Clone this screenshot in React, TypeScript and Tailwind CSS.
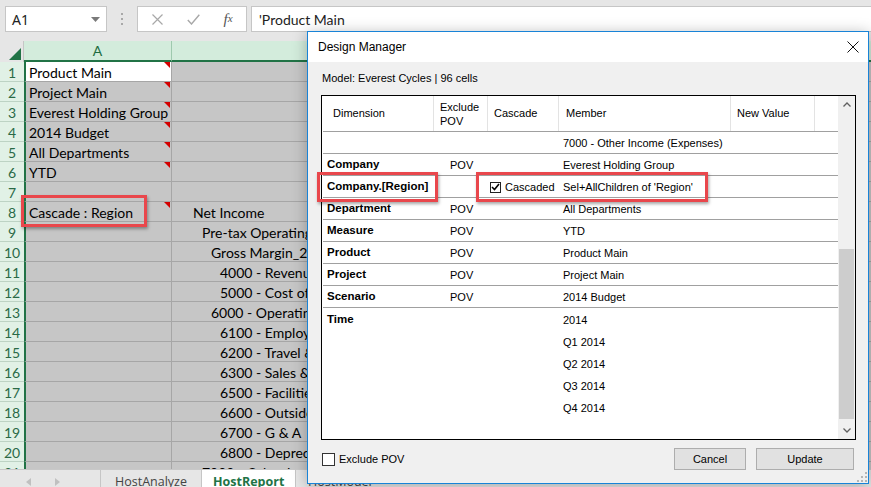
import React from "react";

type Row = { n: number; a?: string; b?: string; ind?: number; mark?: boolean };

const sheetRows: Row[] = [
  { n: 1, a: "Product Main", mark: true },
  { n: 2, a: "Project Main", mark: true },
  { n: 3, a: "Everest Holding Group", mark: true },
  { n: 4, a: "2014 Budget", mark: true },
  { n: 5, a: "All Departments", mark: true },
  { n: 6, a: "YTD", mark: true },
  { n: 7 },
  { n: 8, a: "Cascade : Region", b: "Net Income", ind: 21, mark: true },
  { n: 9, b: "Pre-tax Operating Income", ind: 30 },
  { n: 10, b: "Gross Margin_2800", ind: 39 },
  { n: 11, b: "4000 - Revenue", ind: 48 },
  { n: 12, b: "5000 - Cost of Goods Sold", ind: 48 },
  { n: 13, b: "6000 - Operating Expenses", ind: 39 },
  { n: 14, b: "6100 - Employee Expenses", ind: 48 },
  { n: 15, b: "6200 - Travel & Entertainment", ind: 48 },
  { n: 16, b: "6300 - Sales & Marketing", ind: 48 },
  { n: 17, b: "6500 - Facilities", ind: 48 },
  { n: 18, b: "6600 - Outside Services", ind: 48 },
  { n: 19, b: "6700 - G & A", ind: 48 },
  { n: 20, b: "6800 - Depreciation", ind: 48 },
  { n: 21, b: "7000 - Other Income (Expenses)", ind: 30 },
];

const indCls: Record<number, string> = {
  21: "pl-[21px]",
  30: "pl-[30px]",
  39: "pl-[39px]",
  48: "pl-[48px]",
};

type DmRow = { dim: string; ex?: string; cas?: boolean; mem: string };
const dmRows: DmRow[] = [
  { dim: "", mem: "7000 - Other Income (Expenses)" },
  { dim: "Company", ex: "POV", mem: "Everest Holding Group" },
  { dim: "Company.[Region]", cas: true, mem: "Sel+AllChildren of 'Region'" },
  { dim: "Department", ex: "POV", mem: "All Departments" },
  { dim: "Measure", ex: "POV", mem: "YTD" },
  { dim: "Product", ex: "POV", mem: "Product Main" },
  { dim: "Project", ex: "POV", mem: "Project Main" },
  { dim: "Scenario", ex: "POV", mem: "2014 Budget" },
];
const timeRows = ["2014", "Q1 2014", "Q2 2014", "Q3 2014", "Q4 2014"];

function CommentMark() {
  return (
    <span className="absolute top-0 right-[1px] w-0 h-0 border-t-[6px] border-t-[#d40000] border-l-[6px] border-l-transparent" />
  );
}

function Toolbar() {
  return (
    <div className="h-[41px] shrink-0 bg-[#e6e6e6] flex items-start pt-[6px]">
      <div className="ml-[5px] w-[102px] h-[26px] bg-white border border-[#c6c6c6] flex items-center justify-between pl-[6px] pr-[6px] text-[14px] text-[#222] font-['Noto_Sans',sans-serif]">
        <span>A1</span>
        <svg width="9" height="5" viewBox="0 0 9 5">
          <path d="M0 0 L9 0 L4.5 5 Z" fill="#7a7a7a" />
        </svg>
      </div>
      <div className="w-[30px] h-[26px] flex flex-col items-center justify-center gap-[3px]">
        <span className="w-[2px] h-[2px] bg-[#a8a8a8]" />
        <span className="w-[2px] h-[2px] bg-[#a8a8a8]" />
        <span className="w-[2px] h-[2px] bg-[#a8a8a8]" />
      </div>
      <div className="w-[110px] h-[26px] bg-white border border-[#c6c6c6] flex items-center">
        <div className="w-[38px] flex justify-center">
          <svg width="11" height="11" viewBox="0 0 11 11">
            <path d="M0.5 0.5 L10.5 10.5 M10.5 0.5 L0.5 10.5" stroke="#a8a8a8" strokeWidth="1.2" />
          </svg>
        </div>
        <div className="w-[34px] flex justify-center">
          <svg width="13" height="11" viewBox="0 0 13 11">
            <path d="M0.8 6 L4.5 10 L12.3 0.8" stroke="#a8a8a8" strokeWidth="1.4" fill="none" />
          </svg>
        </div>
        <div className="w-[36px] flex justify-center text-[15px] italic text-[#555] font-['Liberation_Serif',serif]">
          f<span className="text-[11px] relative top-[2px]">x</span>
        </div>
      </div>
      <div className="ml-[4px] flex-1 h-[26px] bg-white border-y border-l border-[#c6c6c6] flex items-center pl-[7px] text-[14px] text-[#222] font-['Lato',sans-serif]">
        'Product Main
      </div>
    </div>
  );
}

function Sheet() {
  return (
    <div className="flex flex-col shrink-0 font-['Lato',sans-serif]">
      <div className="h-[21px] flex shrink-0">
        <div className="w-[24px] bg-[#e6e6e6] border-r border-[#c6c6c6] flex items-end justify-end pr-[2px] pb-[2px]">
          <svg width="12" height="12" viewBox="0 0 12 12">
            <path d="M12 0 L12 12 L0 12 Z" fill="#217346" />
          </svg>
        </div>
        <div className="w-[148px] bg-[#d3ecdc] border-r border-[#9ec9ae] border-b-2 border-b-[#217346] flex items-center justify-center text-[14px] text-[#1d6b40]">
          A
        </div>
        <div className="flex-1 bg-[#d3ecdc] border-b-2 border-b-[#217346]" />
      </div>
      <div className="h-[407px] overflow-hidden flex flex-col">
        {sheetRows.map((r) => (
          <div key={r.n} className="h-[20px] shrink-0 flex">
            <div className="w-[24px] bg-[#e1f1e6] border-b border-[#bdd3c4] flex items-center justify-center pt-[1px] text-[14px] text-[#2a6a46]">
              {r.n}
            </div>
            <div
              className={
                "relative w-[148px] border-l-2 border-l-[#217346] border-r border-r-[#a6a6a6] border-b border-b-[#a6a6a6] flex items-center pl-[3px] pt-[1px] text-[14px] text-black whitespace-nowrap overflow-hidden " +
                (r.n === 1 ? "bg-white" : "bg-[#c6c6c6]")
              }
            >
              {r.a}
              {r.mark ? <CommentMark /> : null}
            </div>
            <div
              className={
                "w-[135px] bg-[#c6c6c6] border-b border-[#a6a6a6] flex items-center pt-[1px] text-[14px] text-black whitespace-nowrap overflow-hidden " +
                (r.ind ? indCls[r.ind] : "")
              }
            >
              {r.b}
            </div>
            <div className="flex-1 bg-[#c6c6c6] border-b border-[#a6a6a6]" />
          </div>
        ))}
      </div>
    </div>
  );
}

function Tabs() {
  return (
    <div className="h-[25px] shrink-0 bg-[#e6e6e6] border-t border-[#c8c8c8] flex text-[12.5px] font-['Open_Sans',sans-serif]">
      <div className="w-[100px] flex items-center">
        <svg className="ml-[26px]" width="5" height="8" viewBox="0 0 5 8">
          <path d="M5 0 L0 4 L5 8 Z" fill="#c0c0c0" />
        </svg>
        <svg className="ml-[24px]" width="5" height="8" viewBox="0 0 5 8">
          <path d="M0 0 L5 4 L0 8 Z" fill="#c0c0c0" />
        </svg>
      </div>
      <div className="w-[101px] border-l border-[#c6c6c6] flex items-center pl-[14px] text-[#444]">HostAnalyze</div>
      <div className="w-[94px] bg-white border-l border-[#c6c6c6] flex items-center pl-[11px] font-bold text-[#217346]">
        HostReport
      </div>
      <div className="w-[100px] border-l border-[#c6c6c6] flex items-center pl-[12px] text-[#444]">HostModel</div>
    </div>
  );
}

function Dialog() {
  return (
    <div className="absolute left-[307px] top-[31px] w-[562px] h-[453px] border border-[#1883d7] bg-[#f0f0f0] flex flex-col shadow-[0_2px_14px_rgba(0,0,0,0.28)] font-['Liberation_Sans',Arial,sans-serif] text-[11px] text-black">
      <div className="h-[30px] shrink-0 bg-white flex items-center justify-between pl-[10px] pr-[9px] text-[12px]">
        <span>Design Manager</span>
        <svg width="12" height="12" viewBox="0 0 12 12">
          <path d="M0.5 0.5 L11.5 11.5 M11.5 0.5 L0.5 11.5" stroke="#111" strokeWidth="1" />
        </svg>
      </div>
      <div className="flex-1 flex flex-col pl-[13px] pr-[12px] pt-[9px]">
        <div className="pl-[1px] h-[14px] leading-[14px]">Model: Everest Cycles | 96 cells</div>
        <div className="mt-[10px] h-[345px] shrink-0 border border-black bg-white flex">
          <div className="flex-1 flex flex-col pl-[1px]">
            <div className="h-[36px] shrink-0 flex border-b border-[#a0a0a0]">
              <div className="w-[111px] border-r border-[#e3e3e3] flex items-center pl-[10px]">Dimension</div>
              <div className="w-[54px] border-r border-[#e3e3e3] flex items-center pl-[6px] leading-[14px]">
                Exclude
                <br />
                POV
              </div>
              <div className="w-[71px] border-r border-[#e3e3e3] flex items-center pl-[6px]">Cascade</div>
              <div className="w-[172px] border-r border-[#e3e3e3] flex items-center pl-[7px]">Member</div>
              <div className="w-[84px] border-r border-[#e3e3e3] flex items-center pl-[6px]">New Value</div>
              <div className="flex-1" />
            </div>
            {dmRows.map((r, i) => (
              <div key={i} className="h-[22px] shrink-0 flex items-center pt-[1px] border-b border-[#a0a0a0] whitespace-nowrap">
                <div className="w-[111px] pl-[4px] font-bold text-[11.5px]">{r.dim}</div>
                <div className="w-[54px] pl-[16px]">{r.ex}</div>
                <div className="w-[71px] pl-[2px] flex items-center">
                  {r.cas ? (
                    <>
                      <span className="w-[11px] h-[11px] border border-[#222] bg-white flex items-center justify-center">
                        <svg width="9" height="8" viewBox="0 0 9 8">
                          <path d="M1 4 L3.5 6.5 L8 1" stroke="#000" strokeWidth="1.6" fill="none" />
                        </svg>
                      </span>
                      <span className="ml-[4px]">Cascaded</span>
                    </>
                  ) : null}
                </div>
                <div className="w-[172px] pl-[4px]">{r.mem}</div>
                <div className="flex-1" />
              </div>
            ))}
            {timeRows.map((t, i) => (
              <div key={t} className="h-[22px] shrink-0 flex items-center pt-[2px] whitespace-nowrap">
                <div className="w-[111px] pl-[4px] font-bold text-[11.5px]">{i === 0 ? "Time" : ""}</div>
                <div className="w-[54px]" />
                <div className="w-[71px]" />
                <div className="w-[172px] pl-[4px]">{t}</div>
                <div className="flex-1" />
              </div>
            ))}
          </div>
          <div className="w-[17px] shrink-0 bg-[#f0f0f0] flex flex-col">
            <div className="h-[17px] flex items-center justify-center">
              <svg width="8" height="5" viewBox="0 0 8 5">
                <path d="M0.5 4.5 L4 1 L7.5 4.5" stroke="#606060" strokeWidth="1.3" fill="none" />
              </svg>
            </div>
            <div className="flex-1 flex flex-col">
              <div className="h-[136px]" />
              <div className="h-[170px] mx-[1px] bg-[#cdcdcd]" />
            </div>
            <div className="h-[17px] flex items-center justify-center">
              <svg width="8" height="5" viewBox="0 0 8 5">
                <path d="M0.5 0.5 L4 4 L7.5 0.5" stroke="#606060" strokeWidth="1.3" fill="none" />
              </svg>
            </div>
          </div>
        </div>
        <div className="mt-[8px] h-[22px] flex items-center justify-between">
          <div className="flex items-center pl-[1px]">
            <span className="w-[13px] h-[13px] border border-[#333] bg-white" />
            <span className="ml-[4px]">Exclude POV</span>
          </div>
          <div className="flex mr-[2px]">
            <div className="w-[72px] h-[22px] bg-[#e1e1e1] border border-[#adadad] flex items-center justify-center">Cancel</div>
            <div className="ml-[10px] w-[98px] h-[22px] bg-[#e1e1e1] border border-[#adadad] flex items-center justify-center">Update</div>
          </div>
        </div>
      </div>
      <svg className="absolute right-[1px] bottom-[1px]" width="10" height="10" viewBox="0 0 10 10">
        <g fill="#b5b5b5">
          <rect x="8" y="0" width="2" height="2" />
          <rect x="4" y="4" width="2" height="2" />
          <rect x="8" y="4" width="2" height="2" />
          <rect x="0" y="8" width="2" height="2" />
          <rect x="4" y="8" width="2" height="2" />
          <rect x="8" y="8" width="2" height="2" />
        </g>
      </svg>
    </div>
  );
}

export default function App() {
  return (
    <div className="relative w-[871px] h-[487px] overflow-hidden bg-white flex flex-col">
      <Toolbar />
      <Sheet />
      <Tabs />
      <Dialog />
      <div className="absolute left-[21px] top-[195px] w-[126px] h-[32px] border-[3px] border-[#e9474c] shadow-[1px_2px_3px_rgba(0,0,0,0.35)]" />
      <div className="absolute left-[317px] top-[172px] w-[121px] h-[30px] border-[3px] border-[#e9474c] shadow-[1px_2px_3px_rgba(0,0,0,0.35)]" />
      <div className="absolute left-[476px] top-[172px] w-[232px] h-[30px] border-[3px] border-[#e9474c] shadow-[1px_2px_3px_rgba(0,0,0,0.35)]" />
    </div>
  );
}
